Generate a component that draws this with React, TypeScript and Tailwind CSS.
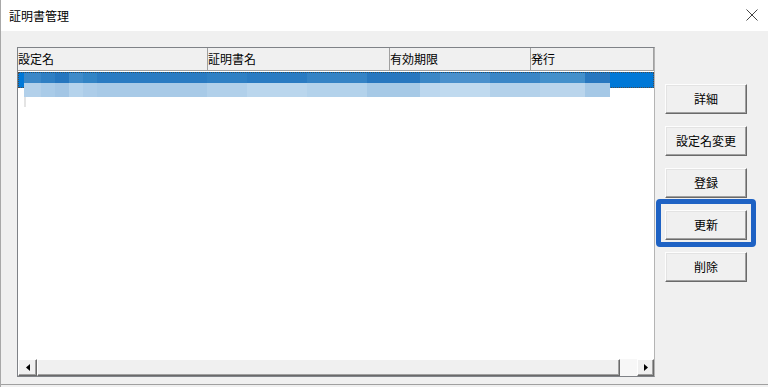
const darkCells = [
  'w-[17px] bg-[#3b87c7]',
  'w-[14px] bg-[#2f7fc3]',
  'w-[14px] bg-[#2576bf]',
  'w-[14px] bg-[#3f8bc9]',
  'w-[14px] bg-[#3284c5]',
  'w-[110px] bg-[#2a7bc2]',
  'w-[40px] bg-[#2f80c4]',
  'w-[60px] bg-[#2a7bc2]',
  'w-[60px] bg-[#3583c5]',
  'w-[53px] bg-[#2877bf]',
  'w-[20px] bg-[#3b87c6]',
  'w-[50px] bg-[#4a90cc]',
  'w-[50px] bg-[#3a86c6]',
  'w-[45px] bg-[#4490cb]',
  'flex-1 bg-[#2877bf]',
];

const lightCells = [
  'w-[17px] bg-[#b2d0ea]',
  'w-[14px] bg-[#a9cbe8]',
  'w-[14px] bg-[#a3c6e5]',
  'w-[14px] bg-[#b5d3ec]',
  'w-[14px] bg-[#adcde9]',
  'w-[110px] bg-[#a8cae7]',
  'w-[40px] bg-[#b1d0ea]',
  'w-[60px] bg-[#bad6ed]',
  'w-[60px] bg-[#b3d2eb]',
  'w-[53px] bg-[#a6c9e6]',
  'w-[20px] bg-[#bcd7ee]',
  'w-[50px] bg-[#c0daef]',
  'w-[50px] bg-[#b3d1ea]',
  'w-[45px] bg-[#bad5ec]',
  'flex-1 bg-[#a5c8e6]',
];

const columns = [
  { label: '設定名', width: 'w-[190px]' },
  { label: '証明書名', width: 'w-[182px]' },
  { label: '有効期限', width: 'w-[141px]' },
  { label: '発行', width: 'flex-1' },
];

function RaisedButton({ label }: { label: string }) {
  return (
    <button className="flex h-[30px] w-[82px] items-center justify-center border border-t-[#fdfdfd] border-l-[#fdfdfd] border-r-[#6a6a6a] border-b-[#6a6a6a] bg-[#f0f0f0] text-[12px] text-black shadow-[inset_-1px_-1px_0_#a0a0a0,inset_1px_1px_0_#e3e3e3]">
      {label}
    </button>
  );
}

function ScrollButton({ dir, width }: { dir: 'left' | 'right'; width: string }) {
  return (
    <div
      className={`flex h-full ${width} items-center justify-center border border-t-white border-l-white border-r-[#6a6a6a] border-b-[#6a6a6a] bg-[#f0f0f0] shadow-[inset_-1px_-1px_0_#a0a0a0]`}
    >
      <svg width="4" height="7" viewBox="0 0 4 7">
        {dir === 'left' ? <path d="M4 0 L0 3.5 L4 7 Z" fill="#000" /> : <path d="M0 0 L4 3.5 L0 7 Z" fill="#000" />}
      </svg>
    </div>
  );
}

export default function App() {
  return (
    <div className="flex h-[387px] w-[768px] flex-col overflow-hidden border-l border-[#a8a8a8] bg-[#f0f0f0] font-['Noto_Sans_CJK_JP','Noto_Sans',sans-serif] text-black">
      <div className="flex h-[31px] shrink-0 items-center justify-between bg-white pl-[8px] pr-[10px]">
        <span className="text-[12px]">証明書管理</span>
        <svg width="12" height="12" viewBox="0 0 12 12" className="mt-[-1px]">
          <path d="M0.5 0.5 L11.5 11.5 M11.5 0.5 L0.5 11.5" stroke="#444" strokeWidth="1" />
        </svg>
      </div>

      <div className="flex h-[353px] shrink-0 pl-[16px] pt-[16px]">
        <div className="flex h-[330px] w-[638px] flex-col border border-[#7f8287] border-r-[#b4b4b4] bg-white">
          <div className="flex h-[23px] shrink-0 border-b border-[#a0a0a0] bg-[#f0f0f0]">
            {columns.map((col) => (
              <div key={col.label} className={`flex h-full items-center border-r border-[#a0a0a0] text-[12px] ${col.width}`}>
                {col.label}
              </div>
            ))}
          </div>

          <div className="relative flex-1">
            <div className="mt-[1px] h-[16px] border border-dotted border-[#4a4a4a] bg-[#0078d7]" />
            <div className="absolute left-[6px] top-[2px] flex w-[586px] flex-col">
              <div className="flex h-[10px]">
                {darkCells.map((c, i) => (
                  <div key={i} className={c} />
                ))}
              </div>
              <div className="flex h-[14px]">
                {lightCells.map((c, i) => (
                  <div key={i} className={c} />
                ))}
              </div>
            </div>
            <div className="absolute left-[6px] top-[26px] h-[10px] w-[2px] bg-[#e4e4e4]" />
          </div>

          <div className="flex h-[17px] shrink-0">
            <ScrollButton dir="left" width="w-[19px]" />
            <div className="h-full flex-1 border border-t-white border-l-white border-r-[#6a6a6a] border-b-[#6a6a6a] bg-[#f0f0f0] shadow-[inset_-1px_-1px_0_#a0a0a0]" />
            <div className="h-full w-[17px] bg-[#f7f7f7]" />
            <ScrollButton dir="right" width="w-[17px]" />
          </div>
        </div>

        <div className="ml-[10px] flex flex-col gap-[12px] pt-[37px]">
          <RaisedButton label="詳細" />
          <RaisedButton label="設定名変更" />
          <RaisedButton label="登録" />
          <div className="relative">
            <RaisedButton label="更新" />
            <div className="absolute -bottom-[7px] -left-[9px] -right-[9px] -top-[11px] rounded-[4px] border-[5px] border-[#1e62c4]" />
          </div>
          <RaisedButton label="削除" />
        </div>
      </div>

      <div className="h-[1px] shrink-0 bg-[#a0a0a0]" />
      <div className="flex-1 bg-[#f0f0f0]" />
    </div>
  );
}
